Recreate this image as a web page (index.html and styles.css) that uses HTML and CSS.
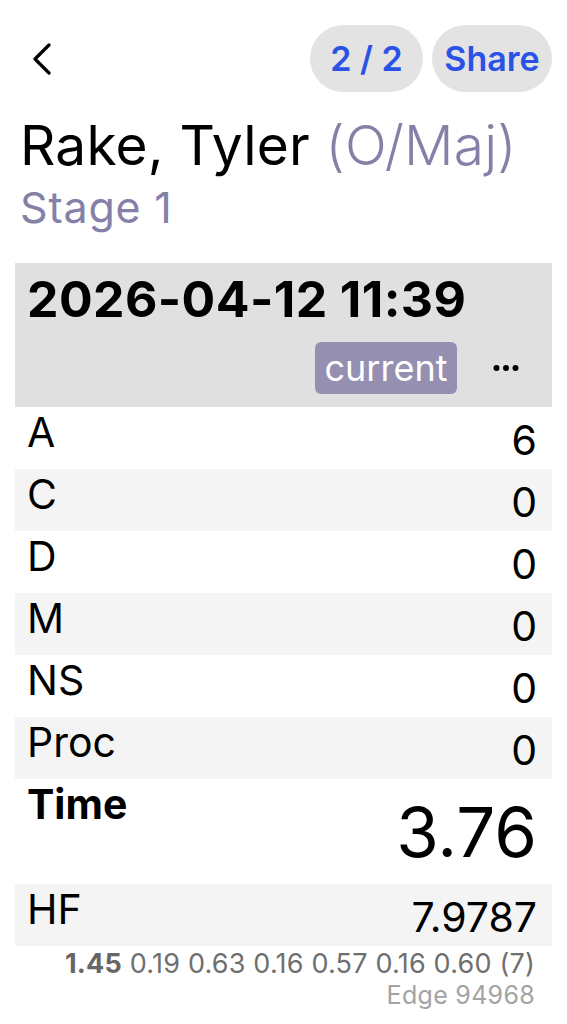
FILE: index.html
```html
<!DOCTYPE html>
<html lang="en">
<head>
<meta charset="utf-8">
<title>Rake, Tyler</title>
<link rel="stylesheet" href="styles.css">
</head>
<body>
<div class="page">
  <header class="topbar">
    <button class="back" aria-label="Back">
      <svg width="20" height="32" viewBox="0 0 20 32"><path d="M17 2 L3 16 L17 30" fill="none" stroke="#000" stroke-width="3.2" stroke-linecap="round" stroke-linejoin="round"/></svg>
    </button>
    <div class="pills">
      <span class="pill pill-count">2 / 2</span>
      <span class="pill pill-share">Share</span>
    </div>
  </header>

  <section class="heading">
    <h1 class="name">Rake, Tyler <span class="division">(O/Maj)</span></h1>
    <div class="stage">Stage 1</div>
  </section>

  <section class="card">
    <div class="card-head">
      <div class="date">2026-04-12 11:39</div>
      <div class="head-actions">
        <span class="badge">current</span>
        <span class="more" aria-label="More">
          <svg width="26" height="8" viewBox="0 0 26 8"><circle cx="3.5" cy="4" r="3"/><circle cx="13" cy="4" r="3"/><circle cx="22.5" cy="4" r="3"/></svg>
        </span>
      </div>
    </div>
    <div class="row"><span class="label">A</span><span class="value">6</span></div>
    <div class="row alt"><span class="label">C</span><span class="value">0</span></div>
    <div class="row"><span class="label">D</span><span class="value">0</span></div>
    <div class="row alt"><span class="label">M</span><span class="value">0</span></div>
    <div class="row"><span class="label">NS</span><span class="value">0</span></div>
    <div class="row alt"><span class="label">Proc</span><span class="value">0</span></div>
    <div class="row time"><span class="label bold">Time</span><span class="value big">3.76</span></div>
    <div class="row alt"><span class="label">HF</span><span class="value">7.9787</span></div>
  </section>

  <footer class="footer">
    <div class="splits"><b>1.45</b> 0.19 0.63 0.16 0.57 0.16 0.60 (7)</div>
    <div class="edge">Edge 94968</div>
  </footer>
</div>
</body>
</html>
```

FILE: styles.css
```css
* { box-sizing: border-box; }

html, body {
  margin: 0;
  padding: 0;
  background: #ffffff;
}

body {
  font-family: "Inter", "Noto Sans", "Liberation Sans", sans-serif;
  color: #000;
}

.page {
  width: 567px;
}

.topbar {
  display: flex;
  justify-content: space-between;
  align-items: center;
  padding: 25px 15px 0 32px;
}

.back {
  background: none;
  border: 0;
  padding: 0;
  margin: 0;
  width: 20px;
  height: 32px;
  display: flex;
}

.pills {
  display: flex;
  gap: 9px;
}

.pill {
  display: flex;
  align-items: center;
  justify-content: center;
  height: 67px;
  border-radius: 34px;
  background: #e3e3e3;
  color: #2a52e6;
  font-size: 34px;
  font-weight: 600;
}

.pill-count { width: 113px; }
.pill-share { width: 120px; }

.heading {
  padding: 0 0 0 20px;
}

.name {
  margin: 21px 0 0 0;
  font-size: 55px;
  font-weight: 400;
  line-height: 64px;
  letter-spacing: 0.2px;
}

.division {
  color: #8580a8;
  font-weight: 300;
}

.stage {
  color: #8580a8;
  font-size: 43px;
  line-height: 44px;
  letter-spacing: 0.8px;
  margin-top: 8px;
}

.card {
  margin: 34px 15px 0 15px;
}

.card-head {
  background: #e0e0e0;
  padding: 12px 33px 13px 12px;
  display: flex;
  flex-direction: column;
}

.date {
  font-size: 50px;
  font-weight: 700;
  line-height: 48px;
  letter-spacing: 0.4px;
}

.head-actions {
  margin-top: 19px;
  display: flex;
  justify-content: flex-end;
  align-items: center;
  gap: 36px;
}

.badge {
  background: #958fb2;
  color: #fff;
  height: 52px;
  width: 142px;
  border-radius: 6px;
  font-size: 36px;
  line-height: 52px;
  text-align: center;
}

.more {
  display: flex;
  fill: #000;
}

.row {
  display: flex;
  justify-content: space-between;
  min-height: 62px;
  padding: 0 15px 0 12px;
  font-size: 41px;
  line-height: 40px;
}

.row.alt { background: #f4f4f4; }

.row.time { min-height: 105px; }

.label {
  align-self: flex-start;
  padding-top: 5px;
}

.label.bold { font-weight: 700; }

.value {
  align-self: flex-end;
  padding-bottom: 9px;
}

.value.big {
  font-size: 69px;
  line-height: 69px;
  padding-bottom: 17px;
}

.footer {
  padding: 2px 32px 0 0;
  text-align: right;
}

.splits {
  color: #6f6f6f;
  font-size: 27px;
  line-height: 32px;
  letter-spacing: 0.2px;
}

.splits b {
  font-weight: 700;
  color: #666;
}

.edge {
  color: #a3a3a3;
  font-size: 25px;
  line-height: 31px;
  letter-spacing: 0.3px;
}
```
